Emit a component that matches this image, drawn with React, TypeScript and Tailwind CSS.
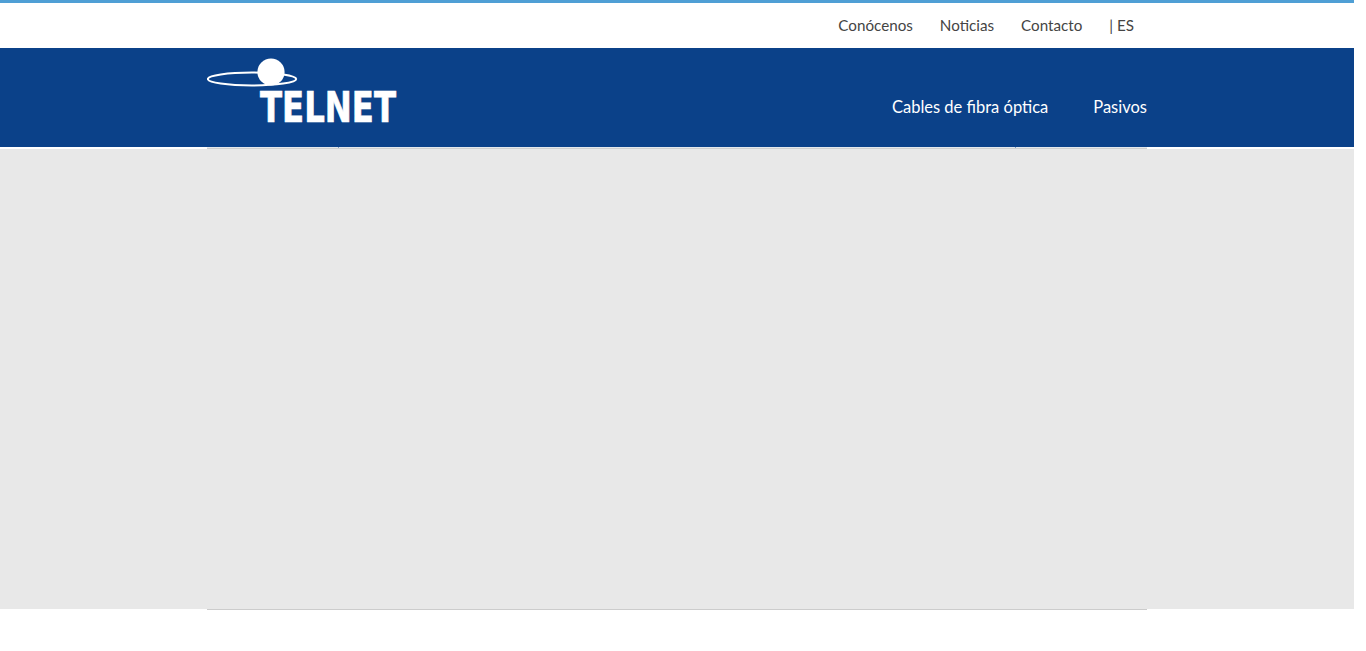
const topLinks = ["Conócenos", "Noticias", "Contacto", "| ES"];
const mainLinks = ["Cables de fibra óptica", "Pasivos"];

const Logo = () => (
  <svg width="240" height="80" viewBox="0 0 240 80" aria-label="Telnet">
    <ellipse cx="45" cy="21" rx="44.2" ry="6.4" fill="none" stroke="#fff" strokeWidth="2" />
    <circle cx="64" cy="14" r="13.6" fill="#fff" />
    <text
      x="53"
      y="64"
      textLength="136"
      lengthAdjust="spacingAndGlyphs"
      fill="#fff"
      stroke="#fff"
      strokeWidth="0.7"
      fontSize="42.5"
      fontWeight="700"
      fontFamily="'DejaVu Sans', sans-serif"
    >
      TELNET
    </text>
  </svg>
);

export default function App() {
  return (
    <div className="flex h-[651px] w-[1354px] flex-col bg-white font-['Lato',sans-serif]">
      <div className="h-12 border-t-[3px] border-[#4f9fd5] bg-white">
        <nav className="mx-auto flex h-[45px] w-[940px] items-center justify-end gap-[27px] pr-[13px] text-[15.2px] text-[#444]">
          {topLinks.map((link) => (
            <a key={link} href="#">
              {link}
            </a>
          ))}
        </nav>
      </div>

      <header className="h-[99px] bg-[#0b4189]">
        <div className="mx-auto flex h-full w-[940px] items-start justify-between pt-[10px]">
          <Logo />
          <nav className="flex gap-[45px] pt-[37px] text-[16.5px] text-white">
            {mainLinks.map((link) => (
              <a key={link} href="#">
                {link}
              </a>
            ))}
          </nav>
        </div>
      </header>

      <div className="h-[2px] bg-white">
        <div className="mx-auto flex h-full w-[940px] justify-between border-b border-[#cfcfcf] bg-[#e4e8ec] pl-[131px] pr-[131px]">
          <span className="h-px w-px bg-[#7f9cc4]" />
          <span className="h-px w-px bg-[#7f9cc4]" />
        </div>
      </div>

      <main className="h-[460px] bg-[#e8e8e8]" />
      <div className="mx-auto h-px w-[940px] bg-[#cccccc]" />
    </div>
  );
}
